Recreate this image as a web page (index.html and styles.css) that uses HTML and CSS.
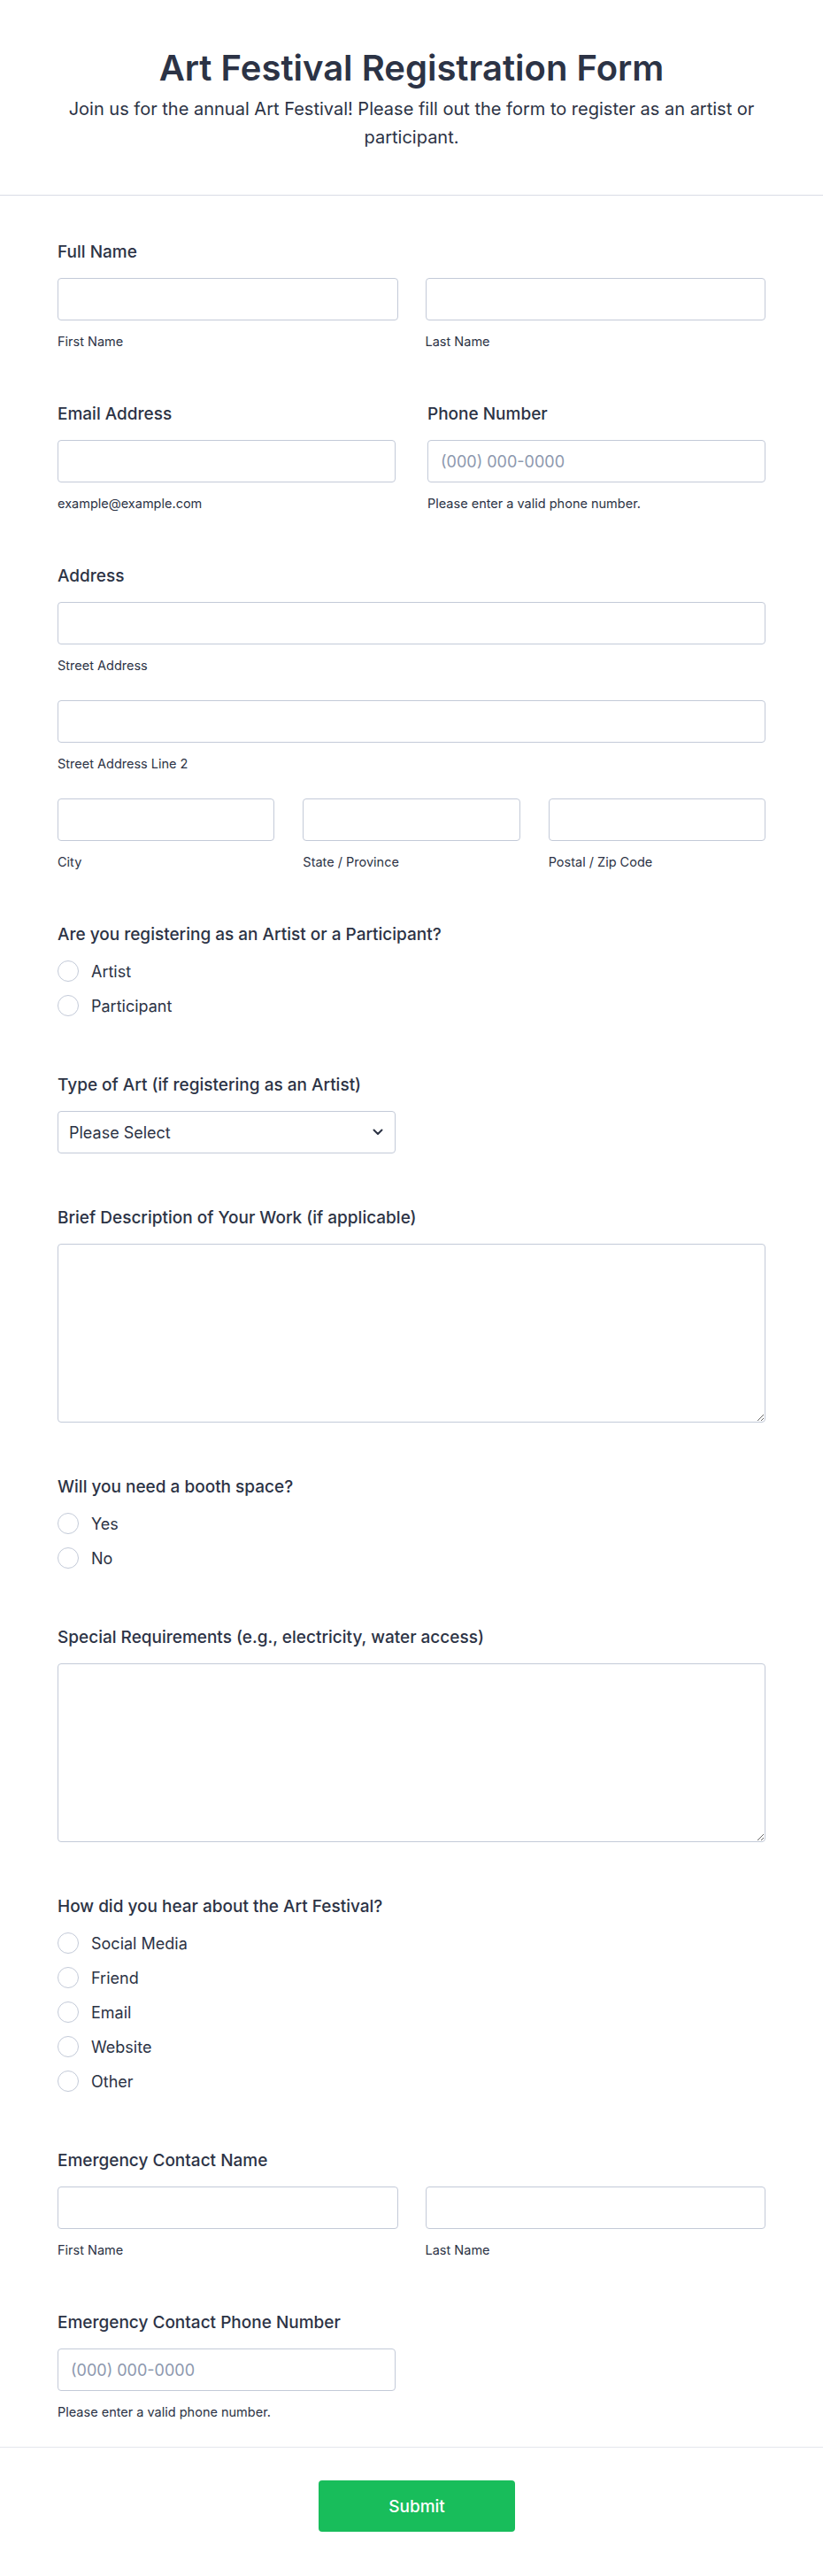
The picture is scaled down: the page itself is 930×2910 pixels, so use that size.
FILE: index.html
```html
<!DOCTYPE html>
<html lang="en">
<head>
<meta charset="utf-8">
<title>Art Festival Registration Form</title>
<link rel="stylesheet" href="styles.css">
</head>
<body>
<div class="page">
  <header class="form-header">
    <h1 class="title">Art Festival Registration Form</h1>
    <p class="subtitle">Join us for the annual Art Festival! Please fill out the form to register as an artist or participant.</p>
  </header>

  <form class="form-body">
    <section class="field">
      <div class="label">Full Name</div>
      <div class="cols cols-name">
        <div class="col"><input class="input" type="text"><div class="sub">First Name</div></div>
        <div class="col"><input class="input" type="text"><div class="sub">Last Name</div></div>
      </div>
    </section>

    <section class="field">
      <div class="cols cols-contact">
        <div class="col">
          <div class="label">Email Address</div>
          <input class="input" type="email">
          <div class="sub">example@example.com</div>
        </div>
        <div class="col">
          <div class="label">Phone Number</div>
          <input class="input" type="tel" placeholder="(000) 000-0000">
          <div class="sub">Please enter a valid phone number.</div>
        </div>
      </div>
    </section>

    <section class="field">
      <div class="label">Address</div>
      <div class="addr-row"><input class="input" type="text"><div class="sub">Street Address</div></div>
      <div class="addr-row"><input class="input" type="text"><div class="sub">Street Address Line 2</div></div>
      <div class="cols cols-three">
        <div class="col"><input class="input" type="text"><div class="sub">City</div></div>
        <div class="col"><input class="input" type="text"><div class="sub">State / Province</div></div>
        <div class="col"><input class="input" type="text"><div class="sub">Postal / Zip Code</div></div>
      </div>
    </section>

    <section class="field">
      <div class="label">Are you registering as an Artist or a Participant?</div>
      <div class="radios">
        <label class="radio"><input type="radio" name="role"><span>Artist</span></label>
        <label class="radio"><input type="radio" name="role"><span>Participant</span></label>
      </div>
    </section>

    <section class="field">
      <div class="label">Type of Art (if registering as an Artist)</div>
      <div class="select-wrap">
        <select class="select"><option>Please Select</option></select>
        <svg class="chevron" width="12" height="8" viewBox="0 0 12 8"><path d="M1.5 1.5 L6 6 L10.5 1.5" fill="none" stroke="#2c3345" stroke-width="2" stroke-linecap="round" stroke-linejoin="round"/></svg>
      </div>
    </section>

    <section class="field">
      <div class="label">Brief Description of Your Work (if applicable)</div>
      <textarea class="textarea"></textarea>
    </section>

    <section class="field">
      <div class="label">Will you need a booth space?</div>
      <div class="radios">
        <label class="radio"><input type="radio" name="booth"><span>Yes</span></label>
        <label class="radio"><input type="radio" name="booth"><span>No</span></label>
      </div>
    </section>

    <section class="field">
      <div class="label">Special Requirements (e.g., electricity, water access)</div>
      <textarea class="textarea"></textarea>
    </section>

    <section class="field">
      <div class="label">How did you hear about the Art Festival?</div>
      <div class="radios">
        <label class="radio"><input type="radio" name="src"><span>Social Media</span></label>
        <label class="radio"><input type="radio" name="src"><span>Friend</span></label>
        <label class="radio"><input type="radio" name="src"><span>Email</span></label>
        <label class="radio"><input type="radio" name="src"><span>Website</span></label>
        <label class="radio"><input type="radio" name="src"><span>Other</span></label>
      </div>
    </section>

    <section class="field">
      <div class="label">Emergency Contact Name</div>
      <div class="cols cols-name">
        <div class="col"><input class="input" type="text"><div class="sub">First Name</div></div>
        <div class="col"><input class="input" type="text"><div class="sub">Last Name</div></div>
      </div>
    </section>

    <section class="field">
      <div class="label">Emergency Contact Phone Number</div>
      <div class="half"><input class="input" type="tel" placeholder="(000) 000-0000"></div>
      <div class="sub">Please enter a valid phone number.</div>
    </section>
  </form>

  <footer class="form-footer">
    <button class="submit" type="button">Submit</button>
  </footer>
</div>
</body>
</html>
```

FILE: styles.css
```css
* { box-sizing: border-box; }
html, body { margin: 0; padding: 0; background: #fff; }
body {
  font-family: Inter, "Noto Sans", "Liberation Sans", sans-serif;
  color: #2c3345;
}
.page { width: 930px; }

.form-header {
  padding: 53px 65px 49px;
  text-align: center;
  border-bottom: 1px solid #d9dce6;
}
.title {
  margin: 0;
  font-size: 40px;
  line-height: 48px;
  font-weight: 600;
}
.subtitle {
  margin: 6px 0 0;
  font-size: 20px;
  line-height: 32px;
  font-weight: 400;
}

.form-body {
  padding: 21px 65px 0;
}
.field {
  padding: 33px 0 30px;
}
.label {
  font-size: 19px;
  line-height: 20px;
  font-weight: 500;
  margin-bottom: 19px;
}
.cols { display: grid; }
.cols-name { grid-template-columns: 1fr 1fr; column-gap: 31px; }
.cols-contact { grid-template-columns: 1fr 1fr; column-gap: 36px; }
.cols-three { grid-template-columns: 1fr 1fr 1fr; column-gap: 32px; }
.addr-row { margin-bottom: 30px; }
.half { width: 382px; }

.input, .select, .textarea {
  display: block;
  width: 100%;
  height: 48px;
  border: 1px solid #c3cad8;
  border-radius: 4px;
  background: #fff;
  font-family: inherit;
  font-size: 18px;
  color: #2c3345;
  padding: 0 14px;
  outline: none;
}
.input::placeholder { color: #8d98ae; }
.sub {
  margin-top: 15px;
  font-size: 14.5px;
  line-height: 18px;
  color: #2c3345;
}

.select-wrap { position: relative; width: 382px; }
.select {
  appearance: none;
  -webkit-appearance: none;
  padding: 0 12px;
}
.chevron { position: absolute; right: 14px; top: 20px; pointer-events: none; }

.textarea {
  height: 202px;
  resize: vertical;
  padding: 12px 14px;
}

.radios {
  display: flex;
  flex-direction: column;
  gap: 15px;
  margin-bottom: 5px;
}
.radio {
  display: flex;
  align-items: center;
  height: 24px;
  font-size: 18px;
}
.radio input {
  appearance: none;
  -webkit-appearance: none;
  width: 24px;
  height: 24px;
  margin: 0 14px 0 0;
  border: 1.5px solid #c3cad8;
  border-radius: 50%;
  background: #fff;
  flex: none;
}

.form-footer {
  border-top: 1px solid #e4e6ed;
  padding: 37px 0 46px 12px;
  display: flex;
  justify-content: center;
}
.submit {
  width: 222px;
  height: 58px;
  border: 0;
  border-radius: 4px;
  background: #18bd5b;
  color: #fff;
  font-family: inherit;
  font-size: 19px;
  font-weight: 500;
}
```
